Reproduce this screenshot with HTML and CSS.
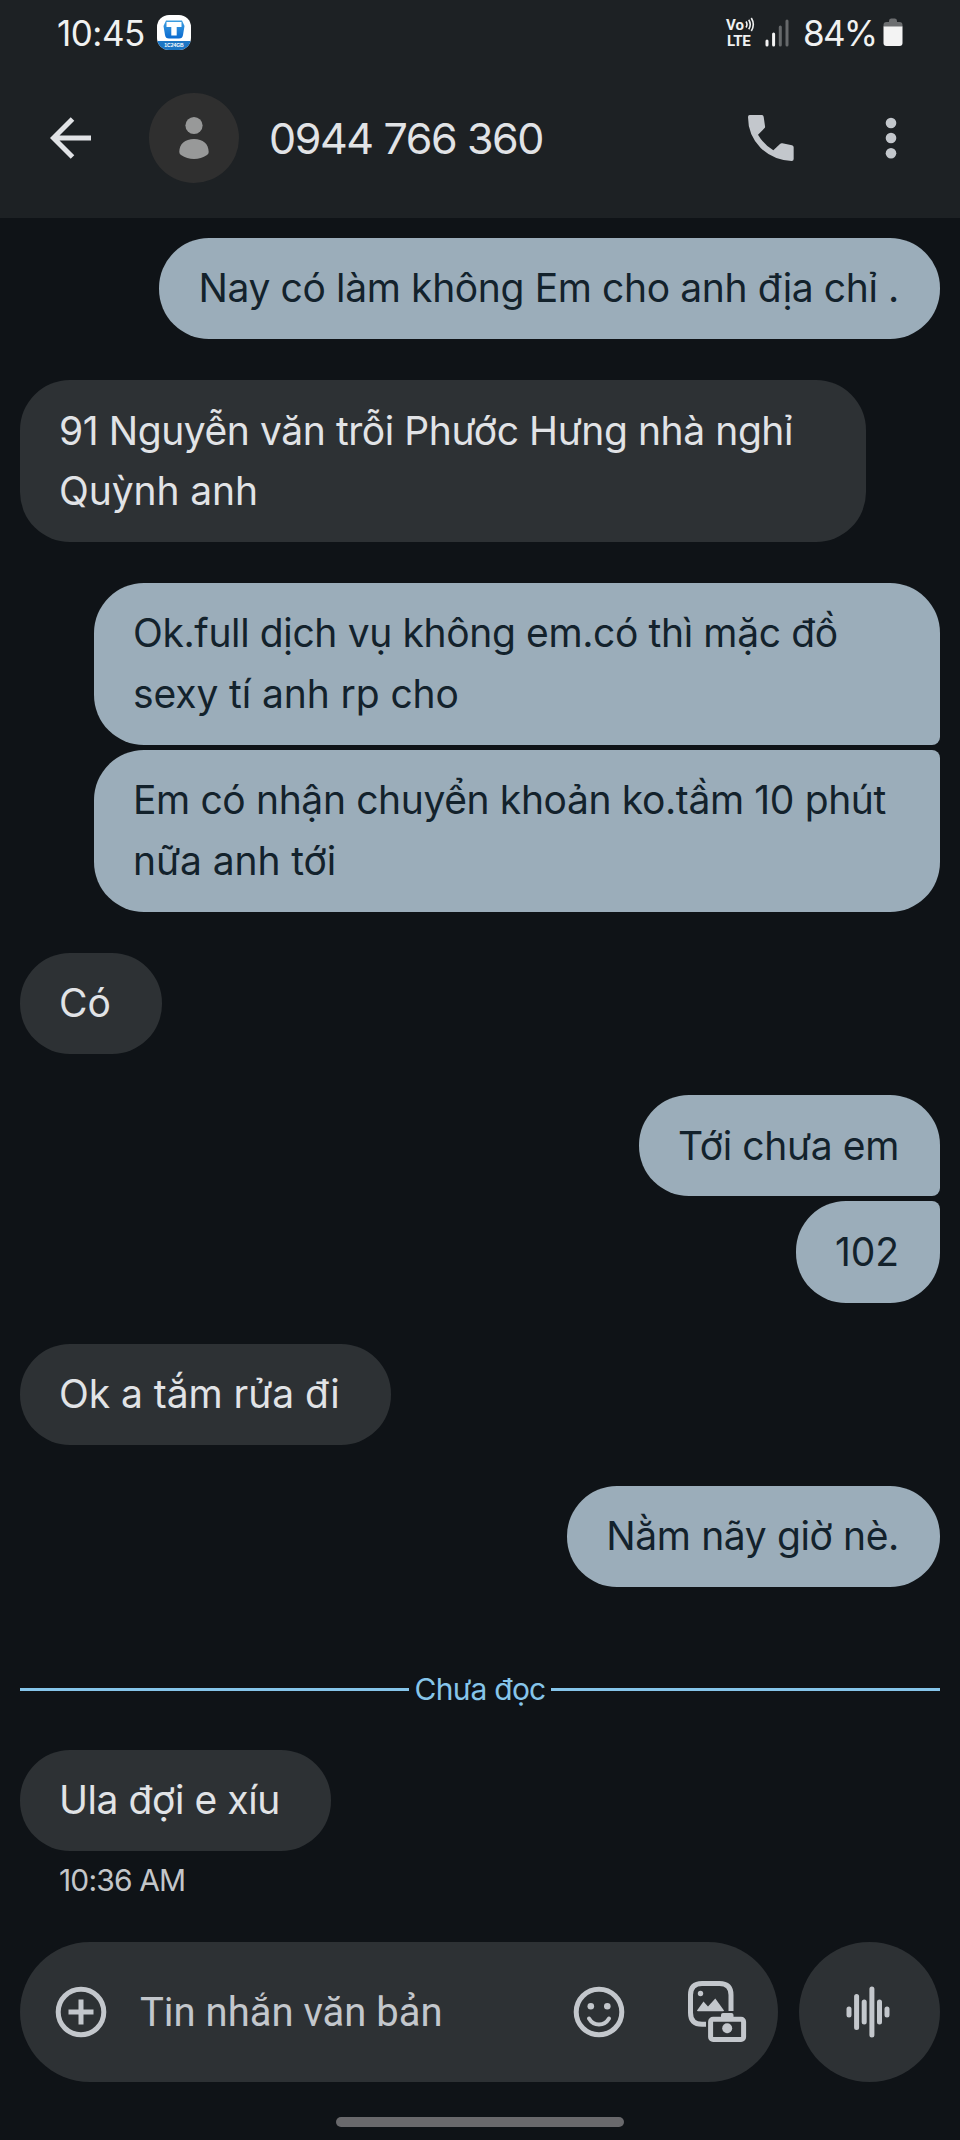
FILE: index.html
```html
<!DOCTYPE html>
<html lang="vi">
<head>
<meta charset="utf-8">
<title>0944 766 360</title>
<link rel="stylesheet" href="styles.css">
</head>
<body>
<div class="screen">
  <header class="top">
    <div class="status">
      <span class="clock">10:45</span>
      <svg class="app" viewBox="0 0 34 35">
        <defs>
          <clipPath id="tile"><rect width="34" height="35" rx="12"/></clipPath>
          <linearGradient id="blue" x1="0" y1="0" x2="0" y2="1"><stop offset="0" stop-color="#3e9fe0"/><stop offset="1" stop-color="#0a6ad0"/></linearGradient>
        </defs>
        <g clip-path="url(#tile)">
          <rect width="34" height="35" fill="#fff"/>
          <rect y="26" width="34" height="9" fill="#1d76c4"/>
        </g>
        <path d="M9 5.5H25L27.5 11L26 20Q25.500 23.500 22 23.500H12Q8.500 23.500 8 20L6.500 11Z" fill="url(#blue)"/>
        <path d="M9.500 7H24.500V12H19.700V20.500H14.300V12H9.500Z" fill="#fff"/>
        <text class="app-label" x="17" y="32" text-anchor="middle">1C24GB</text>
      </svg>
      <span class="spacer"></span>
      <div class="volte">
        <div class="volte-row">
          <span class="vo">Vo</span>
          <svg class="waves" viewBox="0 0 10 15"><path d="M1 4.500Q3 7.500 1 10.500M3.700 2.700Q6.800 7.500 3.700 12.300M6.300 1Q10.300 7.500 6.300 14"/></svg>
        </div>
        <span class="lte">LTE</span>
      </div>
      <svg class="signal" viewBox="0 0 25 28">
        <path d="M2 22V26M8.600 15V26"/>
        <path class="dim" d="M15.300 8V26M22 2V26"/>
      </svg>
      <span class="percent">84%</span>
      <svg class="battery" viewBox="0 0 20 29">
        <path d="M6 3Q6 .500 8 .500H12Q14 .500 14 3V4H16.500Q19.500 4 19.500 7V9H.500V7Q.500 4 3.500 4H6Z" fill="#6c6e70"/>
        <path d="M.500 8.500H19.500V25Q19.500 28 16.500 28H3.500Q.500 28 .500 25Z" fill="#f3f3f3"/>
      </svg>
    </div>
    <div class="bar">
      <svg class="back" viewBox="0 0 42 42"><path d="M22.500 2L3.500 21L22.500 40M3.500 21H41"/></svg>
      <svg class="avatar" viewBox="0 0 90 90">
        <circle cx="45" cy="45" r="45" fill="#2f2f2f"/>
        <circle cx="45" cy="32.500" r="8.600" fill="#989999"/>
        <path d="M30.300 59C30.300 51 36 46 45 46S59.700 51 59.700 59Q59.700 61 58 62Q52 66 45 66T32 62Q30.300 61 30.300 59Z" fill="#989999"/>
      </svg>
      <h1 class="title">0944 766 360</h1>
      <svg class="call" viewBox="804 345 138 138"><path d="M809 345H846Q850 345 851 350L855 378Q856 382 853 385L834 404Q850 432 880 451L900 432Q903 429 907 430L936 436Q941 437 941 442V477Q941 483 935 483Q880 480 842 444Q804 405 804 351Q804 345 809 345Z"/></svg>
      <svg class="more" viewBox="0 0 12 42"><circle cx="6" cy="6" r="5.300"/><circle cx="6" cy="21" r="5.300"/><circle cx="6" cy="36.300" r="5.300"/></svg>
    </div>
  </header>

  <main class="thread">
    <div class="group out"><p class="bubble">Nay có làm không Em cho anh địa chỉ .</p></div>
    <div class="group in"><p class="bubble wide snug">91 Nguyễn văn trỗi Phước Hưng nhà nghỉ<br><span class="loose">Quỳnh anh</span></p></div>
    <div class="group out">
      <p class="bubble wide">Ok.full dịch vụ không em.có thì mặc đồ<br><span class="loose">sexy tí anh rp cho</span></p>
      <p class="bubble wide">Em có nhận chuyển khoản ko.tầm 10 phút<br><span class="loose">nữa anh tới</span></p>
    </div>
    <div class="group in"><p class="bubble">Có</p></div>
    <div class="group out">
      <p class="bubble">Tới chưa em</p>
      <p class="bubble short">102</p>
    </div>
    <div class="group in"><p class="bubble">Ok a tắm rửa đi</p></div>
    <div class="group out"><p class="bubble">Nằm nãy giờ nè.</p></div>
  </main>

  <div class="unread"><span>Chưa đọc</span></div>

  <section class="latest">
    <div class="group in"><p class="bubble snug">Ula đợi e xíu</p></div>
    <time class="time">10:36 AM</time>
  </section>

  <footer class="composer">
    <div class="field">
      <svg class="icon" viewBox="0 0 52 52"><circle cx="26" cy="26" r="22.800"/><path d="M26 13.500V38.500M13.500 26H38.500"/></svg>
      <span class="hint">Tin nhắn văn bản</span>
      <svg class="icon" viewBox="0 0 52 52"><circle cx="26" cy="26" r="22.800"/><path class="smile" d="M16 32.500Q19.500 38.500 26 38.500T36 32.500"/><g class="solid"><circle cx="17.800" cy="20.300" r="3.300"/><circle cx="34.300" cy="20.300" r="3.300"/></g></svg>
      <svg class="gallery" viewBox="0 0 59 62">
        <path d="M18 43.300H14Q2.500 43.300 2.500 31.800V14Q2.500 2.500 14 2.500H31.500Q43 2.500 43 14V30"/>
        <rect x="22.600" y="38.300" width="33" height="20.200" rx="2.500"/>
        <g class="solid"><circle cx="12.500" cy="12.500" r="2.700"/><path d="M9 29.500L15.500 20.500L20 25.500L27.300 17.500L36 29.500Q36 30.300 35 30.300H10Q9 30.300 9 29.500Z"/><path d="M33 36V34Q33 32 35 32H43.500Q45.500 32 45.500 34V36Z"/><circle cx="39.200" cy="47.300" r="5"/></g>
      </svg>
    </div>
    <div class="voice">
      <svg class="wave" viewBox="0 0 44 52"><path d="M3 23V29M10.600 10.500V41.500M18.200 16V36M25.900 3V49M33.500 16V36M41 23V29"/></svg>
    </div>
  </footer>
  <div class="home"></div>
</div>
</body>
</html>
```

FILE: styles.css
```css
* { box-sizing: border-box; }

body {
  margin: 0;
  background: #0f1317;
  font-family: Inter, Roboto, sans-serif;
  font-size: 39px;
  color: #e1e3e6;
}

p, h1 { margin: 0; font-weight: 400; }
svg { display: block; flex: none; }

.screen {
  display: flex;
  flex-direction: column;
  width: 960px;
  height: 2140px;
  overflow: hidden;
}

/* Header */
.top { height: 218px; background: #1d2124; }

.status {
  display: flex;
  align-items: center;
  height: 65px;
  padding: 0 57px 0 57px;
  color: #f0f1f1;
}
.clock { width: 100px; font-size: 35px; letter-spacing: -0.500px; }
.app { width: 34px; height: 35px; }
.app-label { font: 700 5px "Liberation Sans", sans-serif; fill: #fff; }
.spacer { flex: 1; }
.volte { width: 29px; font: 700 15px/16px Roboto, sans-serif; }
.volte-row { display: flex; align-items: center; }
.vo { width: 19px; }
.lte { display: block; padding-left: 1px; letter-spacing: -0.300px; }
.waves { width: 10px; height: 15px; fill: none; stroke: #f0f1f1; stroke-width: 1.600; }
.signal { width: 25px; height: 28px; margin: 0 13px 0 10px; fill: none; stroke: #f3f3f3; stroke-width: 3; stroke-linecap: round; }
.signal .dim { stroke: #66696b; }
.percent { width: 80px; font-size: 35px; letter-spacing: -1.700px; }
.battery { width: 20px; height: 29px; }

.bar { display: flex; align-items: center; height: 145px; padding: 0 63px 0 50px; }
.back { width: 42px; height: 42px; fill: none; stroke: #e1e3e6; stroke-width: 5; }
.avatar { width: 90px; height: 90px; margin-left: 57px; }
.title { flex: 1; padding-left: 30px; font-size: 43px; line-height: 52px; letter-spacing: -1.400px; }
.call { width: 46px; height: 46px; fill: #c3c7cc; }
.more { width: 12px; height: 42px; margin-left: 91px; fill: #c3c7cc; }

/* Conversation */
.thread {
  display: flex;
  flex-direction: column;
  gap: 41px;
  height: 1441px;
  padding: 20px 20px 0;
}
.group { display: flex; flex-direction: column; gap: 5px; }
.in { align-items: flex-start; }
.out { align-items: flex-end; }

.bubble {
  padding: 20.300px 41px 20.300px 39px;
  border-radius: 50px;
  line-height: 60.650px;
  letter-spacing: -0.370px;
  white-space: nowrap;
}
.in .bubble { padding: 20.300px 51px 20.300px 39px; background: #2d3134; letter-spacing: -0.050px; }
.out .bubble { background: #9badba; color: #13222c; }
.out .bubble:not(:last-child) { border-bottom-right-radius: 8px; }
.out .bubble:not(:first-child) { border-top-right-radius: 8px; }
.wide { width: 846px; }
.in .snug { letter-spacing: -0.430px; }
.loose, .short { letter-spacing: -0.100px; }

.unread {
  display: flex;
  align-items: center;
  gap: 5px;
  height: 60px;
  padding: 0 20px;
  font-size: 30px;
  letter-spacing: -0.750px;
  color: #86c5ea;
}
.unread::before, .unread::after { content: ""; flex: 1; height: 3px; background: #86c5ea; }

.latest { height: 192px; padding: 31px 20px 0; }
.time { display: block; padding-left: 39px; font-size: 30px; line-height: 58px; letter-spacing: -0.850px; color: #c3c6c9; }

/* Composer */
.composer { display: flex; gap: 21px; margin-top: 31px; padding: 0 20px; }
.field {
  display: flex;
  align-items: center;
  width: 758px;
  height: 140px;
  padding: 0 31px 0 35px;
  border-radius: 70px;
  background: #2d3134;
}
.icon, .gallery, .wave { fill: none; stroke: #c3c7cc; stroke-width: 5; }
.icon { width: 52px; height: 52px; }
.solid { fill: #c3c7cc; stroke: none; }
.smile { stroke-width: 4; stroke-linecap: round; }
.hint { flex: 1; padding-left: 33px; font-family: Roboto, sans-serif; font-size: 40px; color: #c3c7cc; }
.gallery { width: 59px; height: 62px; margin-left: 63px; }
.voice {
  display: flex;
  align-items: center;
  justify-content: center;
  width: 141px;
  height: 140px;
  padding-right: 3px;
  border-radius: 50%;
  background: #2d3134;
}
.wave { width: 44px; height: 52px; stroke-linecap: round; }
.home { width: 288px; height: 10px; margin: 35px auto 0; border-radius: 5px; background: #69696c; }
```
